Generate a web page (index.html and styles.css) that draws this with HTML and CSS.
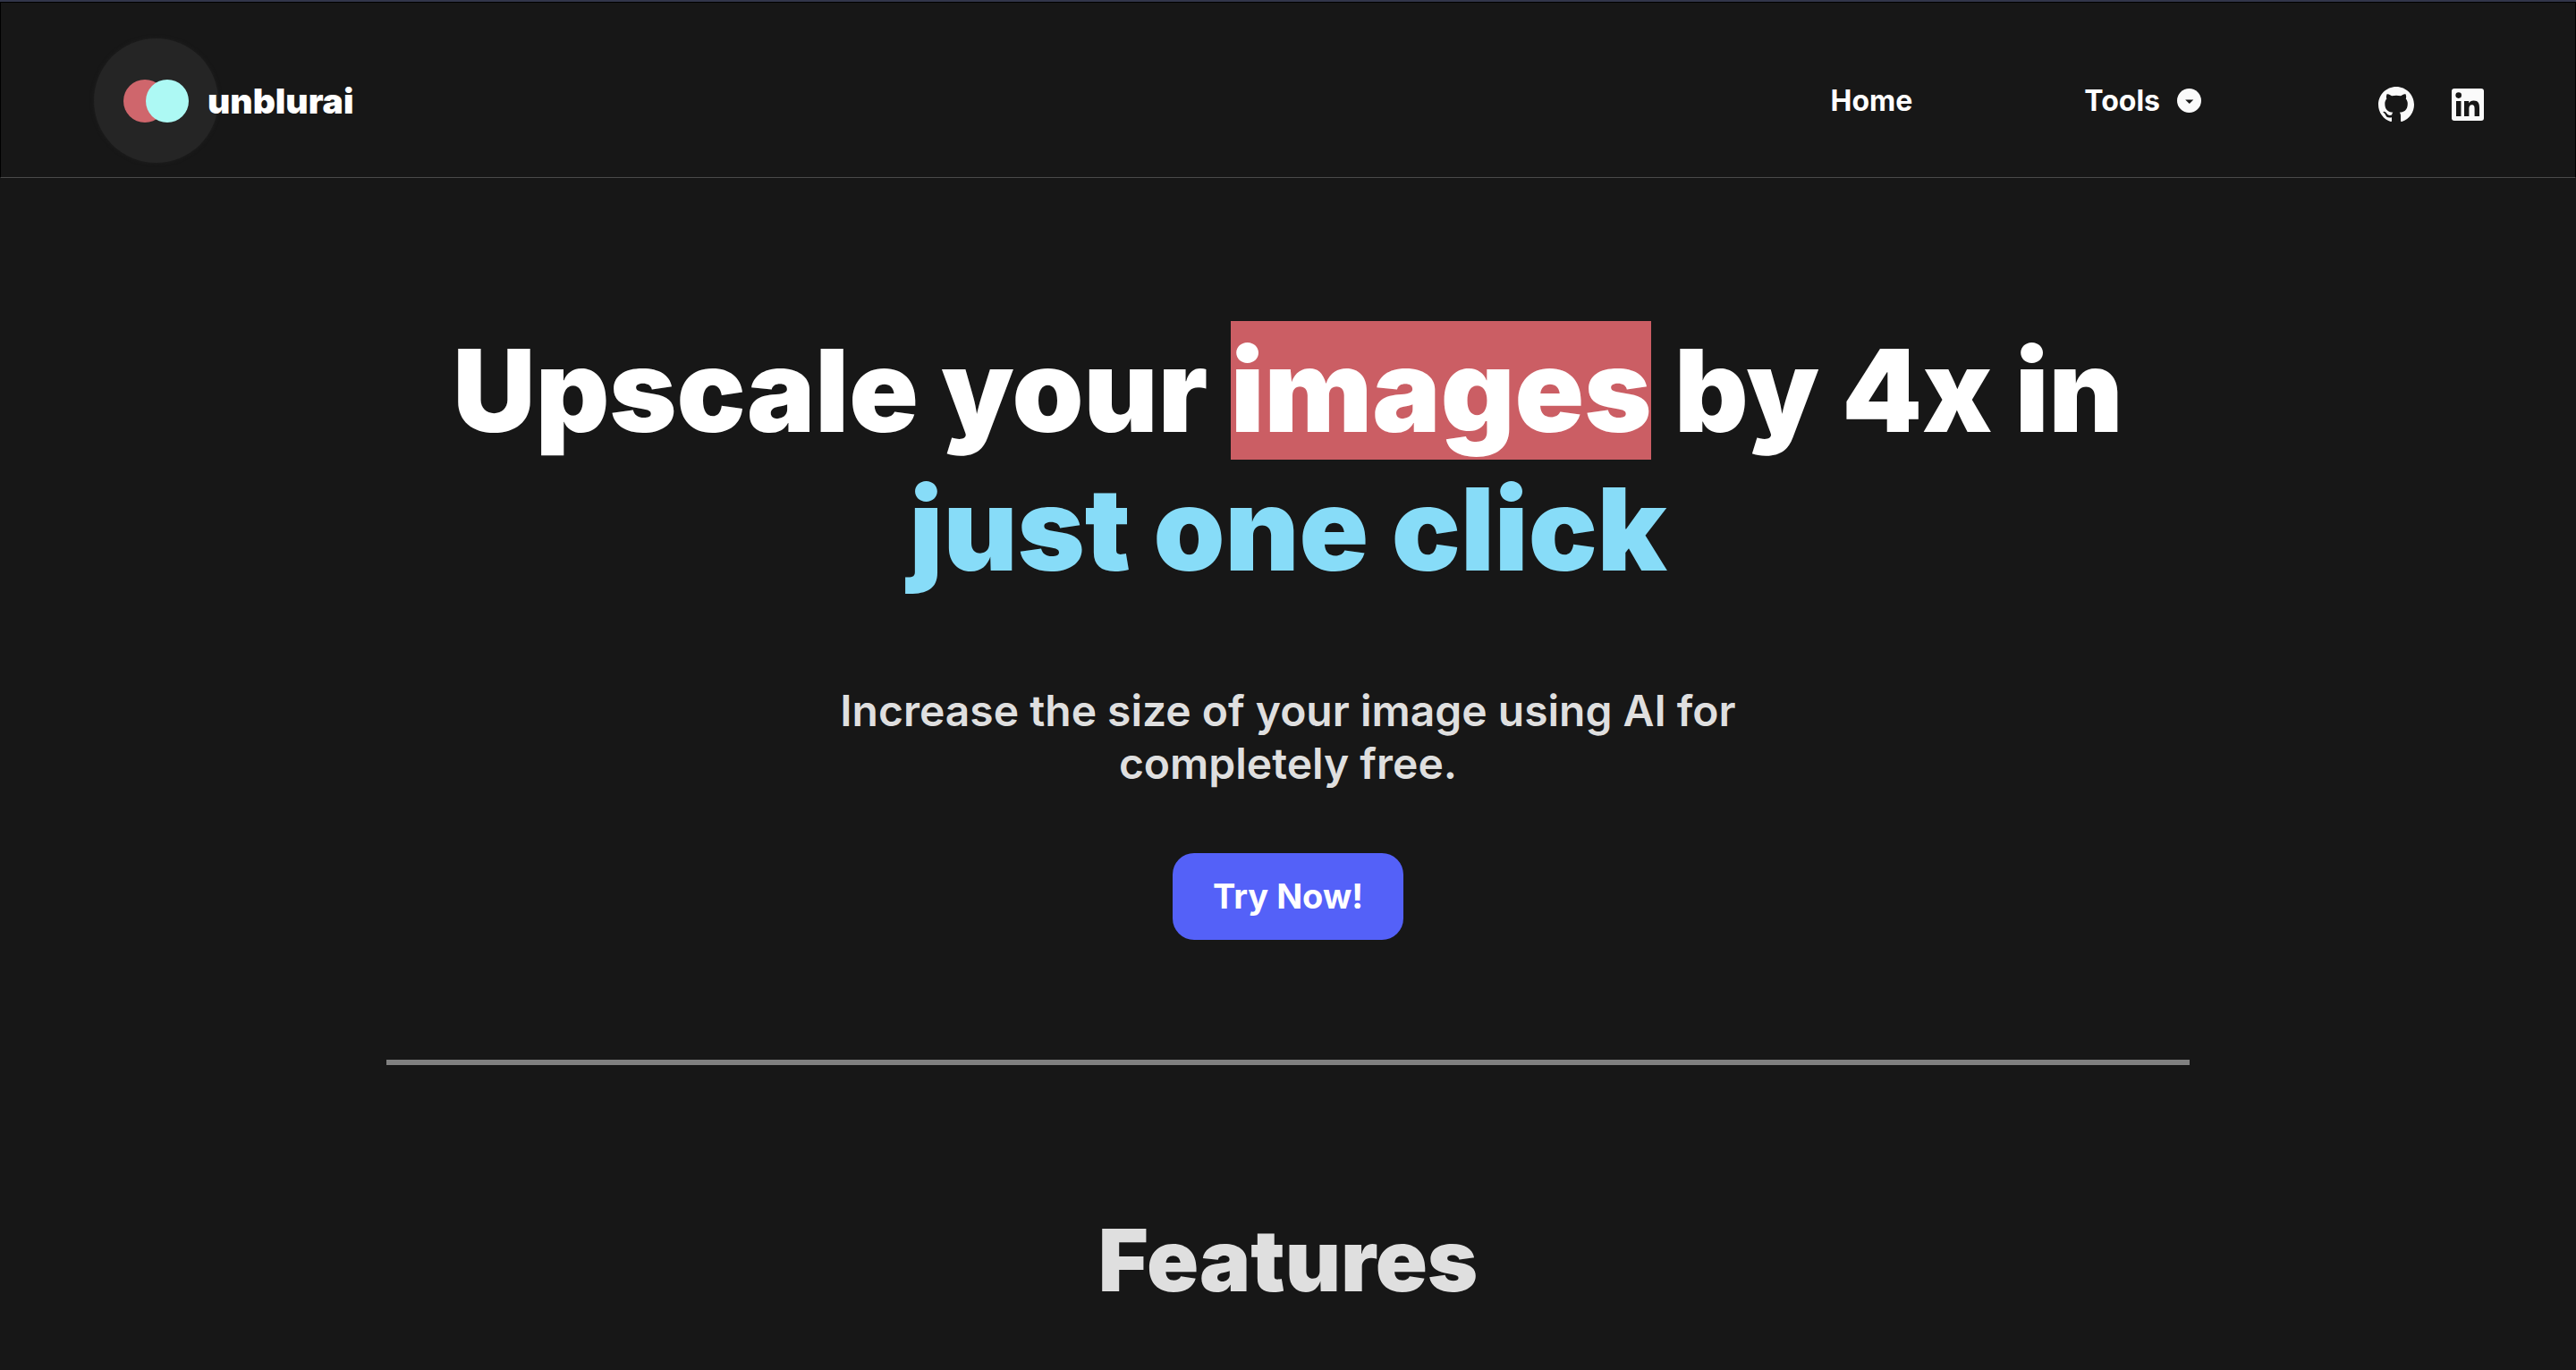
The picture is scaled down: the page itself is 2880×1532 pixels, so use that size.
FILE: index.html
```html
<!DOCTYPE html>
<html lang="en">
<head>
<meta charset="utf-8">
<meta name="viewport" content="width=device-width, initial-scale=1">
<title>unblurai</title>
<link rel="stylesheet" href="styles.css">
</head>
<body>
<header class="site-header">
  <a class="brand" href="#">
    <span class="brand-mark">
      <svg viewBox="0 0 74 48" width="74" height="48" aria-hidden="true"><circle cx="24" cy="24" r="24" fill="#cf666c"/><circle cx="49" cy="24" r="24" fill="#adf9f4"/></svg>
    </span>
    <span class="brand-name">unblurai</span>
  </a>
  <nav class="nav">
    <a class="nav-link" href="#">Home</a>
    <button class="nav-link nav-menu" type="button">Tools
      <svg viewBox="0 0 28 28" width="27" height="27" aria-hidden="true"><circle cx="14" cy="14" r="14" fill="#fafafa"/><path d="M9.500 13h9.500l-4.700 4.500z" fill="#171717"/></svg>
    </button>
    <div class="social">
      <a class="social-link" href="#" aria-label="GitHub"><svg viewBox="0 0 16 16" width="40" height="40" fill="#fafafa"><path d="M8 0C3.580 0 0 3.580 0 8c0 3.540 2.290 6.530 5.470 7.590.4.070.55-.17.55-.38 0-.19-.01-.82-.01-1.490-2.010.37-2.530-.49-2.690-.94-.09-.23-.48-.94-.82-1.130-.28-.15-.68-.52-.01-.53.63-.01 1.080.58 1.230.82.72 1.210 1.870.87 2.330.66.070-.52.28-.87.51-1.070-1.780-.2-3.640-.89-3.640-3.950 0-.87.310-1.590.82-2.150-.08-.2-.36-1.020.08-2.120 0 0 .67-.21 2.200.82.64-.18 1.320-.27 2-.27s1.360.09 2 .27c1.530-1.040 2.200-.82 2.200-.82.44 1.100.16 1.920.08 2.120.51.56.82 1.270.82 2.150 0 3.070-1.870 3.750-3.650 3.950.29.25.54.73.54 1.480 0 1.070-.01 1.930-.01 2.200 0 .21.150.46.55.38A8.010 8.010 0 0 0 16 8c0-4.420-3.580-8-8-8z"/></svg></a>
      <a class="social-link" href="#" aria-label="LinkedIn"><svg viewBox="0 0 36 36" width="36" height="36"><rect width="36" height="36" rx="3" fill="#fafafa"/><g fill="#171717"><circle cx="7.700" cy="7.600" r="3.300"/><path d="M5 14h5.500v17H5zM14 14h5.200v2.300c.9-1.500 2.800-2.700 5.400-2.700 5.300 0 6.400 3.500 6.400 8V31h-5.400v-8.300c0-2-.1-4.500-2.800-4.500s-3.400 2.100-3.400 4.400V31H14z"/></g></svg></a>
    </div>
  </nav>
</header>
<main>
  <section class="hero">
    <h1 class="hero-title">Upscale your <mark class="highlight">images</mark> by 4x in <span class="accent">just one click</span></h1>
    <p class="hero-text">Increase the size of your image using AI for completely free.</p>
    <button class="cta" type="button">Try Now!</button>
  </section>
  <hr class="divider">
  <section class="features">
    <h2 class="features-title">Features</h2>
  </section>
</main>
</body>
</html>
```
FILE: styles.css
```css
* { box-sizing: border-box; }
body {
  margin: 0;
  background: #171717;
  color: #fff;
  font-family: Inter, "Liberation Sans", sans-serif;
}
a { color: inherit; text-decoration: none; }
button { border: 0; padding: 0; background: none; color: inherit; font: inherit; }
svg { display: block; }

.site-header {
  display: flex;
  align-items: center;
  justify-content: space-between;
  margin-top: 2px;
  padding: 40px 102px 16px 104px;
  border: 1px solid #000;
  border-bottom-color: #4a4a4a;
  box-shadow: 0 -2px #32364a;
}
.brand { display: flex; align-items: center; }
.brand-mark {
  display: grid;
  place-items: center;
  width: 139px;
  height: 139px;
  border-radius: 50%;
  background: #252525;
  box-shadow: 0 0 4px #202020;
}
.brand-name { margin-left: -12px; font-size: 39px; font-weight: 900; line-height: 46px; }
.nav { display: flex; align-items: center; }
.nav-link { font-size: 32px; font-weight: 700; line-height: 40px; }
.nav-menu { display: flex; align-items: center; gap: 19px; margin-left: 192px; }
.social { display: flex; align-items: center; gap: 42px; margin-left: 198px; padding-top: 8px; }

.hero { display: flex; flex-direction: column; align-items: center; padding-top: 160px; text-align: center; }
.hero-title { max-width: 2000px; margin: 0; font-size: 128px; font-weight: 900; line-height: 155px; }
.highlight { background: #cb5e64; color: inherit; }
.accent { display: block; color: #87dcf8; }
.hero-text { max-width: 1040px; margin: 96px 0 0; color: #dfdfdf; font-size: 48px; font-weight: 600; line-height: 59px; }
.cta {
  margin-top: 71px;
  padding: 24px 45px;
  border-radius: 24px;
  background: #5461f8;
  font-size: 38px;
  font-weight: 700;
  line-height: 49px;
}
.divider { width: 70%; height: 6px; margin: 134px auto 0; border: 0; background: #808080; }
.features { padding: 160px 0 62px; text-align: center; }
.features-title { margin: 0; color: #dfdfdf; font-size: 96px; font-weight: 900; line-height: 116px; }
```
